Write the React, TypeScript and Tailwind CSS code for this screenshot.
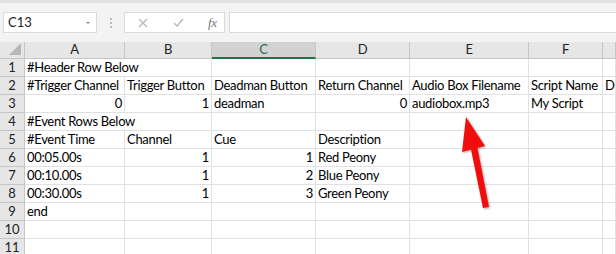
import type { ReactNode } from 'react';

const COLS = 'grid-cols-[25px_100px_87px_104px_94px_119px_74px_1fr]';

type Cell = { t?: string; right?: boolean; span?: number };

const ROWS: Cell[][] = [
  [{ t: '#Header Row Below', span: 2 }, {}, {}, {}, {}, {}],
  [
    { t: '#Trigger Channel' },
    { t: 'Trigger Button' },
    { t: 'Deadman Button' },
    { t: 'Return Channel' },
    { t: 'Audio Box Filename' },
    { t: 'Script Name' },
    { t: 'Di' },
  ],
  [{ t: '0', right: true }, { t: '1', right: true }, { t: 'deadman' }, { t: '0', right: true }, { t: 'audiobox.mp3' }, { t: 'My Script' }, {}],
  [{ t: '#Event Rows Below', span: 2 }, {}, {}, {}, {}, {}],
  [{ t: '#Event Time' }, { t: 'Channel' }, { t: 'Cue' }, { t: 'Description' }, {}, {}, {}],
  [{ t: '00:05.00s' }, { t: '1', right: true }, { t: '1', right: true }, { t: 'Red Peony' }, {}, {}, {}],
  [{ t: '00:10.00s' }, { t: '1', right: true }, { t: '2', right: true }, { t: 'Blue Peony' }, {}, {}, {}],
  [{ t: '00:30.00s' }, { t: '1', right: true }, { t: '3', right: true }, { t: 'Green Peony' }, {}, {}, {}],
  [{ t: 'end' }, {}, {}, {}, {}, {}, {}],
  [{}, {}, {}, {}, {}, {}, {}],
  [{}, {}, {}, {}, {}, {}, {}],
];

function ColHead({ children, active }: { children: ReactNode; active?: boolean }) {
  return (
    <div
      className={
        active
          ? 'flex h-[17px] items-center justify-center border-r border-b-2 border-r-[#c6c6c6] border-b-[#217346] bg-[#d2d2d2] text-[#217346]'
          : 'flex h-[17px] items-center justify-center border-r border-b border-[#c6c6c6] bg-[#e6e6e6] text-[#222]'
      }
    >
      {children}
    </div>
  );
}

function Arrow() {
  return (
    <svg className="pointer-events-none absolute left-0 top-0" width="616" height="254">
      <defs>
        <filter id="sh" x="-20%" y="-20%" width="140%" height="140%">
          <feDropShadow dx="1" dy="1" stdDeviation="1.2" floodColor="#000" floodOpacity="0.35" />
        </filter>
      </defs>
      <g filter="url(#sh)" fill="#f20d0d">
        <polygon points="466,117 485,146 462,152" />
        <polygon points="470.5,147 477,145.5 489,207 483,208" />
      </g>
    </svg>
  );
}

export default function App() {
  return (
    <div className="relative h-[254px] w-[616px] overflow-hidden bg-white font-['Lato','Liberation_Sans',sans-serif] text-[13px] tracking-[-0.3px] text-black">
      {/* formula bar */}
      <div className="h-[42px] bg-[#f3f3f3]">
        <div className="h-[3px] bg-[#e1e1e1]" />
        <div className="flex items-center pt-[9px]">
          <div className="ml-[3px] flex h-[21px] w-[94px] items-center justify-between border border-[#dadada] bg-white pl-[4px] pr-[5px] text-[13px] tracking-normal text-[#222]">
            <span>C13</span>
            <svg width="6" height="4" viewBox="0 0 6 4">
              <path d="M1 1 L3 3 L5 1" fill="#888" />
            </svg>
          </div>
          <div className="flex w-[27px] flex-col items-center gap-[2px]">
            <span className="h-[2px] w-[2px] bg-[#bbb]" />
            <span className="h-[2px] w-[2px] bg-[#bbb]" />
            <span className="h-[2px] w-[2px] bg-[#bbb]" />
          </div>
          <div className="flex h-[21px] w-[101px] items-center border border-[#dadada] bg-white">
            <svg className="ml-[13px]" width="10" height="10" viewBox="0 0 10 10">
              <path d="M1 1 L9 9 M9 1 L1 9" stroke="#b5b5b5" strokeWidth="1.2" />
            </svg>
            <svg className="ml-[25px]" width="11" height="9" viewBox="0 0 11 9">
              <path d="M1 5 L4 8 L10 1" stroke="#b5b5b5" strokeWidth="1.2" fill="none" />
            </svg>
            <span className="ml-[24px] font-['Liberation_Serif',serif] text-[13px] italic text-[#777]">fx</span>
          </div>
          <div className="ml-[4px] h-[21px] flex-1 border border-r-0 border-[#dadada] bg-white" />
        </div>
      </div>

      {/* sheet */}
      <div className={`grid ${COLS}`}>
        <div className="relative h-[17px] border-r border-b border-[#c6c6c6] bg-[#e6e6e6]">
          <svg className="absolute bottom-[3px] right-[3px]" width="12" height="12" viewBox="0 0 12 12">
            <polygon points="12,0 12,12 0,12" fill="#b8b8b8" />
          </svg>
        </div>
        <ColHead>A</ColHead>
        <ColHead>B</ColHead>
        <ColHead active>C</ColHead>
        <ColHead>D</ColHead>
        <ColHead>E</ColHead>
        <ColHead>F</ColHead>
        <ColHead>{''}</ColHead>

        {ROWS.map((row, r) => (
          <Row key={r} n={r + 1} cells={row} />
        ))}
      </div>

      <Arrow />
    </div>
  );
}

function Row({ n, cells }: { n: number; cells: Cell[] }) {
  return (
    <>
      <div className="flex h-[18px] items-center justify-center border-r border-b border-[#c6c6c6] bg-[#e6e6e6] text-[13px] tracking-normal text-[#222]">
        {n}
      </div>
      {cells.map((c, i) => (
        <div
          key={i}
          className={`flex h-[18px] items-center overflow-hidden whitespace-nowrap border-r border-b border-[#e1e1e1] px-[2px] leading-none ${
            c.right ? 'justify-end' : 'justify-start'
          } ${c.span === 2 ? 'col-span-2' : ''}`}
        >
          {c.t}
        </div>
      ))}
    </>
  );
}
